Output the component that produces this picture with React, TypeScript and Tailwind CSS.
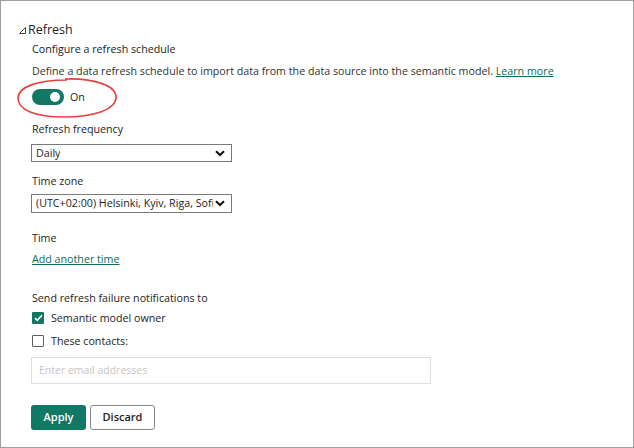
import React from "react";

const Chevron = () => (
  <svg width="10" height="7" viewBox="0 0 10 7" className="shrink-0 ml-[2px]">
    <path d="M1 1.2 L5 5 L9 1.2" fill="none" stroke="#111" strokeWidth="2" />
  </svg>
);

const Select = ({ value }: { value: string }) => (
  <div className="w-[201px] flex items-center justify-between border border-[#7a7a7a] bg-white pl-[4px] pr-[6px] text-[10.7px] text-[#252423] h-full">
    <span className="min-w-0 overflow-hidden whitespace-nowrap">{value}</span>
    <Chevron />
  </div>
);

const Checkbox = ({ checked, label }: { checked?: boolean; label: string }) => (
  <div className="flex items-center h-[16px]">
    {checked ? (
      <div className="w-[12px] h-[12px] bg-[#117865] flex items-center justify-center rounded-[1px]">
        <svg width="9" height="8" viewBox="0 0 9 8">
          <path d="M1 4.2 L3.3 6.3 L8 1.3" fill="none" stroke="#fff" strokeWidth="1.6" />
        </svg>
      </div>
    ) : (
      <div className="w-[12px] h-[12px] border border-[#605e5c] rounded-[1px] bg-white" />
    )}
    <span className="ml-[7px] text-[10.7px] text-[#252423]">{label}</span>
  </div>
);

export default function App() {
  return (
    <div
      className="w-[634px] h-[448px] border border-[#a0a0a0] bg-white relative overflow-hidden"
      style={{ fontFamily: '"Open Sans", "Noto Sans", sans-serif' }}
    >
      <div className="pl-[18px] pt-[19px]">
        {/* heading */}
        <div className="flex items-center h-[20px]">
          <svg width="7" height="7" viewBox="0 0 7 7" className="mt-[1px]">
            <path d="M6.5 0.5 L6.5 6.5 L0.5 6.5 Z" fill="none" stroke="#444" strokeWidth="1" />
          </svg>
          <span className="ml-[2px] text-[12.5px] leading-[20px] text-[#252423]">Refresh</span>
        </div>

        <div className="pl-[13px]">
          <div className="mt-[1px] h-[16px] leading-[16px] text-[10.7px] text-[#252423]">
            Configure a refresh schedule
          </div>
          <div className="mt-[6px] h-[16px] leading-[16px] text-[10.7px] text-[#333] whitespace-nowrap">
            Define a data refresh schedule to import data from the data source into the semantic model.{" "}
            <span className="text-[#0f6b5a] underline">Learn more</span>
          </div>

          {/* toggle */}
          <div className="mt-[10px] flex items-center h-[16px]">
            <div className="w-[32px] h-[16px] rounded-full bg-[#117865] flex items-center justify-end pr-[4px]">
              <div className="w-[10px] h-[10px] rounded-full bg-white" />
            </div>
            <span className="ml-[6px] text-[10.7px] text-[#252423]">On</span>
          </div>

          <div className="mt-[16px] h-[16px] leading-[16px] text-[10.7px] text-[#252423]">Refresh frequency</div>
          <div className="mt-[7px] h-[18px] -ml-[1px]">
            <Select value="Daily" />
          </div>

          <div className="mt-[11px] h-[16px] leading-[16px] text-[10.7px] text-[#252423]">Time zone</div>
          <div className="mt-[5px] h-[19px] -ml-[1px]">
            <Select value="(UTC+02:00) Helsinki, Kyiv, Riga, Sofi" />
          </div>

          <div className="mt-[17px] h-[16px] leading-[16px] text-[10.7px] text-[#252423]">Time</div>
          <div className="mt-[5px] h-[16px] leading-[16px] text-[10.7px] text-[#0f6b5a] underline">
            Add another time
          </div>

          <div className="mt-[23px] h-[16px] leading-[16px] text-[10.7px] text-[#252423]">
            Send refresh failure notifications to
          </div>
          <div className="mt-[4px]">
            <Checkbox checked label="Semantic model owner" />
          </div>
          <div className="mt-[7px]">
            <Checkbox label="These contacts:" />
          </div>

          <div className="mt-[8px] -ml-[1px] w-[400px] h-[27px] border border-[#e1dfdd] flex items-center pl-[7px] text-[10.5px] text-[#c8c6c4]">
            Enter email addresses
          </div>

          <div className="mt-[21px] -ml-[1px] flex gap-[4px]">
            <button className="w-[55px] h-[25px] rounded-[3px] bg-[#117865] text-white text-[11px] font-semibold">
              Apply
            </button>
            <button className="w-[65px] h-[25px] rounded-[3px] border border-[#8a8886] bg-white text-[#252423] text-[11px] font-semibold">
              Discard
            </button>
          </div>
        </div>
      </div>

      {/* red annotation */}
      <svg className="absolute left-[14px] top-[76px]" width="104" height="42" viewBox="0 0 104 42">
        <path
          d="M50 2 C80 1 102 9 101 21 C100 33 78 40 49 40 C20 40 3 33 3 21 C3 10 22 3 52 3"
          fill="none"
          stroke="#e5433d"
          strokeWidth="1.6"
        />
      </svg>
    </div>
  );
}
